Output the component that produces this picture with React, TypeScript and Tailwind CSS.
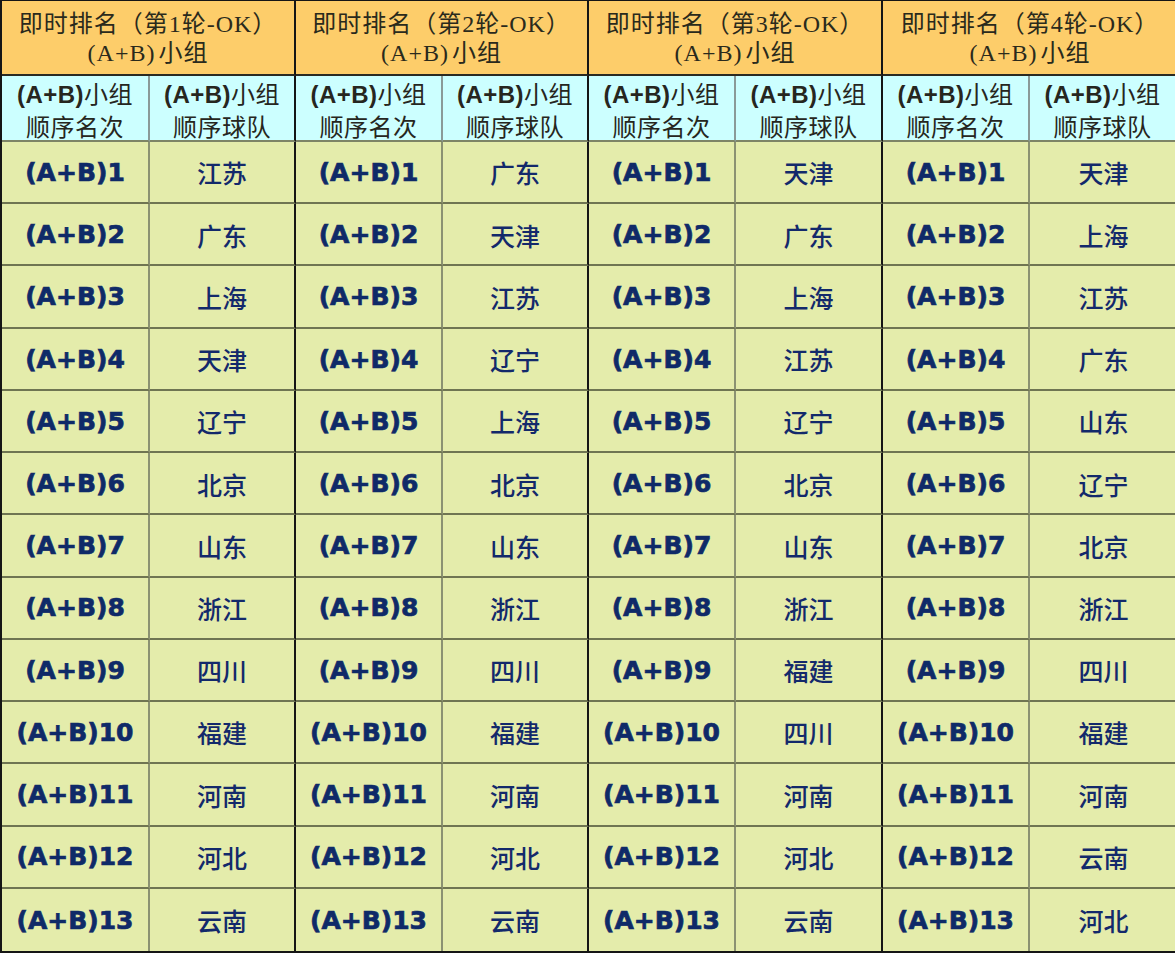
import type { FC } from 'react';

const rounds: string[][] = [
  ['江苏', '广东', '上海', '天津', '辽宁', '北京', '山东', '浙江', '四川', '福建', '河南', '河北', '云南'],
  ['广东', '天津', '江苏', '辽宁', '上海', '北京', '山东', '浙江', '四川', '福建', '河南', '河北', '云南'],
  ['天津', '广东', '上海', '江苏', '辽宁', '北京', '山东', '浙江', '福建', '四川', '河南', '河北', '云南'],
  ['天津', '上海', '江苏', '广东', '山东', '辽宁', '北京', '浙江', '四川', '福建', '河南', '云南', '河北'],
];

const cjk = "font-['Noto_Sans_CJK_SC',sans-serif]";

const SubHeader: FC<{ label: string; last: boolean }> = ({ label, last }) => (
  <div
    className={`flex flex-col items-center justify-center border-b-2 border-b-[#7d8466] bg-[#ccffff] pt-[2px] text-[24px] leading-[31px] tracking-[0.5px] text-[#262620] ${cjk} ${
      last ? 'border-r-2 border-r-[#151515]' : 'border-r-2 border-r-[#8a9a98]'
    }`}
  >
    <div>
      <span className="font-['Liberation_Sans',sans-serif] font-bold">(A+B)</span>小组
    </div>
    <div>{label}</div>
  </div>
);

const App: FC = () => {
  return (
    <div className="h-[953px] w-[1175px] overflow-hidden bg-white">
      <div className="grid h-full w-full grid-cols-[148px_146px_147px_146px_147px_147px_147px_147px] grid-rows-[75px_66px_repeat(13,minmax(0,1fr))] border-2 border-t border-[#151515]">
        {/* Titre de chaque tour */}
        {rounds.map((_, r) => (
          <div
            key={`t${r}`}
            className={`col-span-2 flex flex-col items-center justify-center border-b-2 border-b-[#2a2a22] bg-[#fdcd6a] text-[24px] leading-[29px] tracking-[1px] text-[#2a2a1c] font-['Liberation_Serif','Noto_Sans_CJK_SC',serif] ${
              r < 3 ? 'border-r-2 border-r-[#151515]' : ''
            }`}
          >
            <div className="pt-[2px]">即时排名（第{r + 1}轮-OK）</div>
            <div>
              (A+B)<span className="ml-[3px]">小组</span>
            </div>
          </div>
        ))}

        {/* Sous-titres */}
        {rounds.map((_, r) => (
          <div key={`s${r}`} className="contents">
            <SubHeader label="顺序名次" last={false} />
            <SubHeader label="顺序球队" last={r < 3} />
          </div>
        ))}

        {/* Lignes du classement */}
        {rounds[0].map((_, i) =>
          rounds.map((teams, r) => (
            <div key={`r${i}-${r}`} className="contents">
              <div
                className={`flex items-center justify-center bg-[#e4ecab] pt-[1px] text-[25px] font-bold text-[#0f2a68] font-['DejaVu_Sans',sans-serif] [-webkit-text-stroke:0.7px_#0f2a68] border-r-2 border-r-[#8b9272] ${
                  i < 12 ? 'border-b-2 border-b-[#6f7552]' : ''
                }`}
              >
                (A+B){i + 1}
              </div>
              <div
                className={`flex items-center justify-center bg-[#e4ecab] pt-[2px] text-[25px] font-medium text-[#13296b] ${cjk} ${
                  r < 3 ? 'border-r-2 border-r-[#151515]' : ''
                } ${i < 12 ? 'border-b-2 border-b-[#6f7552]' : ''}`}
              >
                {teams[i]}
              </div>
            </div>
          ))
        )}
      </div>
    </div>
  );
};

export default App;
